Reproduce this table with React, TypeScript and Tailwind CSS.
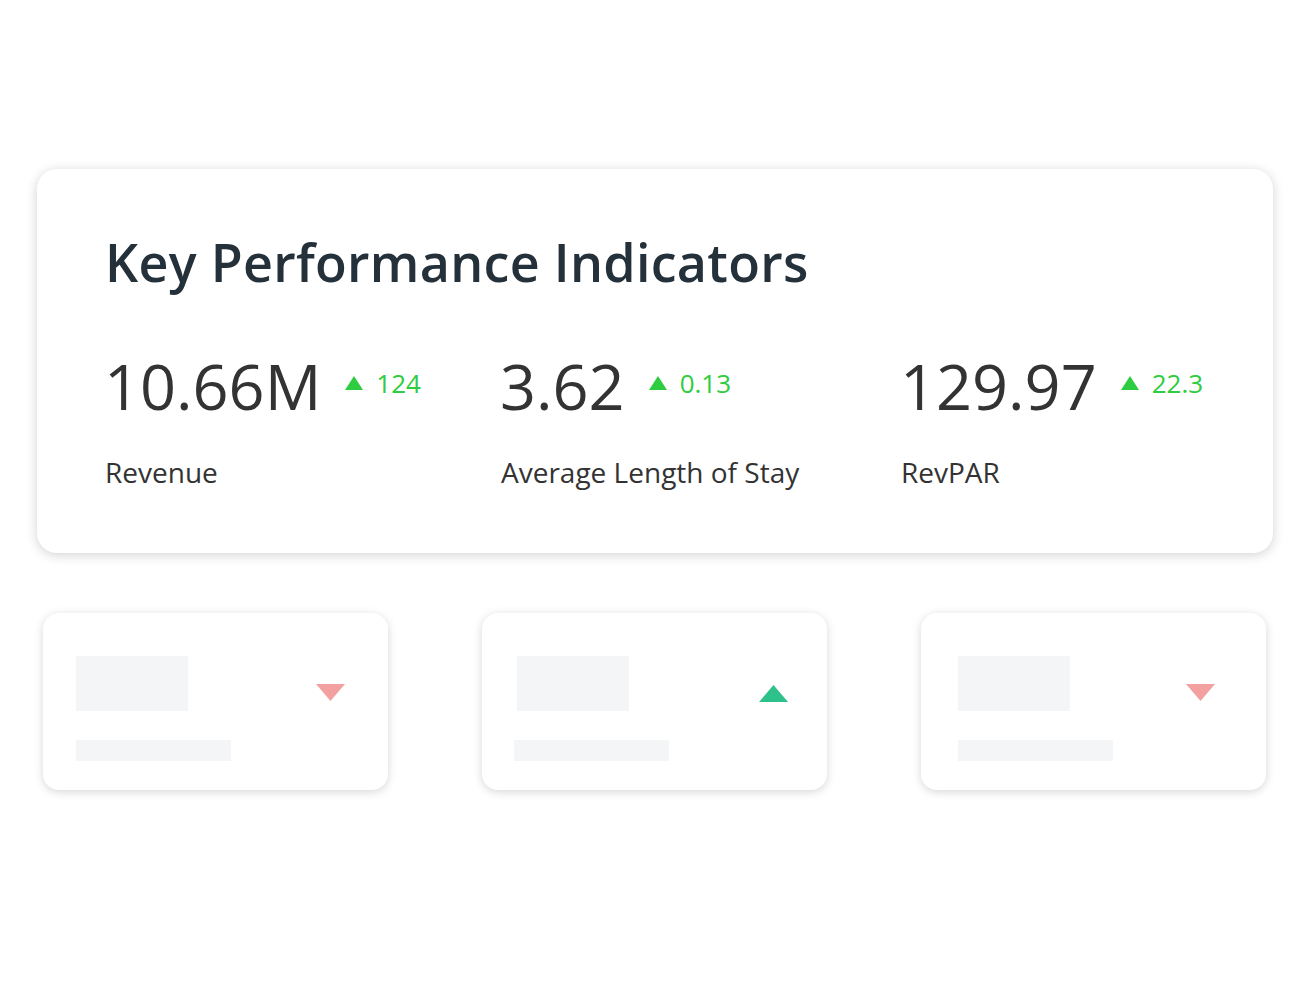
import React from 'react';

type Kpi = { value: string; delta: string; label: string; col: string };

const kpis: Kpi[] = [
  { value: '10.66M', delta: '124', label: 'Revenue', col: 'w-[396px]' },
  { value: '3.62', delta: '0.13', label: 'Average Length of Stay', col: 'w-[400px]' },
  { value: '129.97', delta: '22.3', label: 'RevPAR', col: 'flex-1' },
];

// skeleton cards: left offsets of block, bar and arrow inside each card
const skeletons = [
  { up: false, block: 'ml-[33px]', bar: 'ml-[33px]', arrow: 'left-[273px]' },
  { up: true, block: 'ml-[35px]', bar: 'ml-[32px]', arrow: 'left-[277px]' },
  { up: false, block: 'ml-[37px]', bar: 'ml-[37px]', arrow: 'left-[265px]' },
];

const UpTriangle: React.FC<{ className?: string }> = ({ className }) => (
  <svg viewBox="0 0 18 14" className={className}>
    <polygon points="9,0 18,14 0,14" fill="currentColor" />
  </svg>
);

const Arrow: React.FC<{ up: boolean; className?: string }> = ({ up, className }) => (
  <svg viewBox="0 0 29 17" className={className}>
    <polygon points={up ? '14.5,0 29,17 0,17' : '0,0 29,0 14.5,17'} fill="currentColor" />
  </svg>
);

const SkeletonCard: React.FC<{ up: boolean; block: string; bar: string; arrow: string }> = ({
  up,
  block,
  bar,
  arrow,
}) => (
  <div className="relative w-[345px] h-[177px] rounded-[16px] bg-white shadow-[0_2px_10px_rgba(0,0,0,0.16)] pt-[43px] flex flex-col">
    <div className={`w-[112px] h-[55px] bg-[#f4f5f7] ${block}`} />
    <div className={`w-[155px] h-[21px] bg-[#f4f5f7] mt-[29px] ${bar}`} />
    <Arrow
      up={up}
      className={`absolute w-[29px] h-[17px] ${up ? 'top-[72px] text-[#2fc18c]' : 'top-[71px] text-[#f2a0a0]'} ${arrow}`}
    />
  </div>
);

export default function App() {
  return (
    <div
      className="w-full min-h-[1000px] bg-white pt-[169px]"
      style={{ fontFamily: '"Open Sans", "Noto Sans", sans-serif' }}
    >
      <div className="ml-[37px] w-[1236px] h-[384px] rounded-[20px] bg-white shadow-[0_2px_12px_rgba(0,0,0,0.18)] pl-[69px] pt-[60px]">
        <h1 className="text-[52px] leading-[66px] font-semibold text-[#25313a] tracking-[0.3px] -ml-[1px]">
          Key Performance Indicators
        </h1>
        <div className="flex mt-[56px]">
          {kpis.map((k) => (
            <div key={k.label} className={k.col}>
              <div className="flex items-start">
                <span className="text-[63px] leading-[70px] font-normal text-[#333333] -ml-[2px]">{k.value}</span>
                <span className="flex items-center ml-[24px] mt-[17px] text-[#2ecc40] text-[26px] leading-[30px]">
                  <UpTriangle className="w-[18px] h-[14px] mr-[13px]" />
                  {k.delta}
                </span>
              </div>
              <div className="mt-[34px] text-[28px] leading-[34px] font-medium text-[#333333] -ml-[1px]">
                {k.label}
              </div>
            </div>
          ))}
        </div>
      </div>
      <div className="flex gap-[94px] ml-[43px] mt-[60px]">
        {skeletons.map((s, i) => (
          <SkeletonCard key={i} {...s} />
        ))}
      </div>
    </div>
  );
}
